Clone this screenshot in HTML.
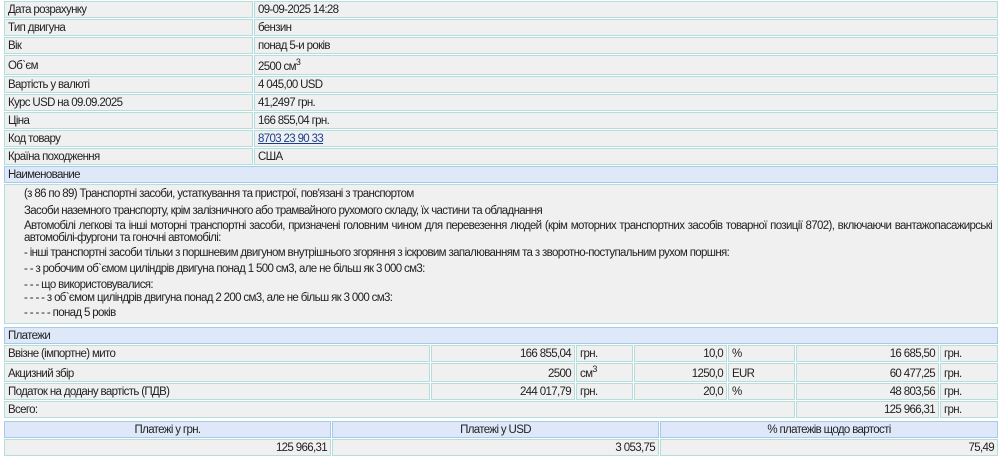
<!DOCTYPE html>
<html><head><meta charset="utf-8"><style>
body{margin:0;width:1000px;height:457px;background:#fff;font-family:"Liberation Sans",Arial,sans-serif;font-size:11.5px;letter-spacing:-0.65px;color:#222;position:relative;overflow:hidden}
.c{position:absolute;box-sizing:border-box;background:#f0f0f0;border:1px solid #b4dede;padding:0 3px;line-height:16px;white-space:nowrap}
.h{background:#dfe8f9;border-color:#a4cce8}
.r{text-align:right}
.m{text-align:center}
sup{font-size:9px;line-height:0}
a{color:#1a3f8f;text-decoration:underline}
.d{position:absolute;left:24px;width:968px;line-height:12px;white-space:nowrap}
.j{text-align:justify;text-align-last:justify;white-space:normal}
</style></head><body>
<div class="c" style="left:4px;top:1px;width:249px;height:17px">Дата розрахунку</div>
<div class="c" style="left:254px;top:1px;width:744px;height:17px">09-09-2025 14:28</div>
<div class="c" style="left:4px;top:19px;width:249px;height:17px">Тип двигуна</div>
<div class="c" style="left:254px;top:19px;width:744px;height:17px">бензин</div>
<div class="c" style="left:4px;top:37px;width:249px;height:17px">Вік</div>
<div class="c" style="left:254px;top:37px;width:744px;height:17px">понад 5-и років</div>
<div class="c" style="left:4px;top:55px;width:249px;height:20px;line-height:20px">Об`єм</div>
<div class="c" style="left:254px;top:55px;width:744px;height:20px;line-height:22px">2500 см<sup>3</sup></div>
<div class="c" style="left:4px;top:76px;width:249px;height:17px">Вартість у валюті</div>
<div class="c" style="left:254px;top:76px;width:744px;height:17px">4 045,00 USD</div>
<div class="c" style="left:4px;top:94px;width:249px;height:17px">Курс USD на 09.09.2025</div>
<div class="c" style="left:254px;top:94px;width:744px;height:17px">41,2497 грн.</div>
<div class="c" style="left:4px;top:112px;width:249px;height:17px">Ціна</div>
<div class="c" style="left:254px;top:112px;width:744px;height:17px">166 855,04 грн.</div>
<div class="c" style="left:4px;top:130px;width:249px;height:17px">Код товару</div>
<div class="c" style="left:254px;top:130px;width:744px;height:17px"><a>8703 23 90 33</a></div>
<div class="c" style="left:4px;top:148px;width:249px;height:17px">Країна походження</div>
<div class="c" style="left:254px;top:148px;width:744px;height:17px">США</div>
<div class="c h" style="left:4px;top:166px;width:994px;height:17px">Наименование</div>
<div class="c" style="left:4px;top:184px;width:994px;height:140px"></div>
<div class="d" style="top:188px">(з 86 по 89) Транспортні засоби, устаткування та пристрої, пов'язані з транспортом</div>
<div class="d" style="top:205px">Засоби наземного транспорту, крім залізничного або трамвайного рухомого складу, їх частини та обладнання</div>
<div class="d j" style="top:220px">Автомобілі легкові та інші моторні транспортні засоби, призначені головним чином для перевезення людей (крім моторних транспортних засобів товарної позиції 8702), включаючи вантажопасажирські</div>
<div class="d" style="top:232px">автомобілі-фургони та гоночні автомобілі:</div>
<div class="d" style="top:247px">- інші транспортні засоби тільки з поршневим двигуном внутрішнього згоряння з іскровим запалюванням та з зворотно-поступальним рухом поршня:</div>
<div class="d" style="top:263px">- - з робочим об`ємом циліндрів двигуна понад 1 500 см3, але не більш як 3 000 см3:</div>
<div class="d" style="top:279px">- - - що використовувалися:</div>
<div class="d" style="top:292px">- - - - з об`ємом циліндрів двигуна понад 2 200 см3, але не більш як 3 000 см3:</div>
<div class="d" style="top:307px">- - - - - понад 5 років</div>
<div class="c h" style="left:4px;top:327px;width:994px;height:17px">Платежи</div>

<div class="c" style="left:4px;top:345px;width:426px;height:17px">Ввізне (імпортне) мито</div>
<div class="c r" style="left:431px;top:345px;width:144px;height:17px">166 855,04</div>
<div class="c" style="left:576px;top:345px;width:57px;height:17px">грн.</div>
<div class="c r" style="left:634px;top:345px;width:93px;height:17px">10,0</div>
<div class="c" style="left:728px;top:345px;width:67px;height:17px">%</div>
<div class="c r" style="left:796px;top:345px;width:143px;height:17px">16 685,50</div>
<div class="c" style="left:940px;top:345px;width:58px;height:17px">грн.</div>

<div class="c" style="left:4px;top:363px;width:426px;height:19px;line-height:20px">Акцизний збір</div>
<div class="c r" style="left:431px;top:363px;width:144px;height:19px;line-height:20px">2500</div>
<div class="c" style="left:576px;top:363px;width:57px;height:19px;line-height:20px">см<sup>3</sup></div>
<div class="c r" style="left:634px;top:363px;width:93px;height:19px;line-height:20px">1250,0</div>
<div class="c" style="left:728px;top:363px;width:67px;height:19px;line-height:20px">EUR</div>
<div class="c r" style="left:796px;top:363px;width:143px;height:19px;line-height:20px">60 477,25</div>
<div class="c" style="left:940px;top:363px;width:58px;height:19px;line-height:20px">грн.</div>

<div class="c" style="left:4px;top:383px;width:426px;height:17px">Податок на додану вартість (ПДВ)</div>
<div class="c r" style="left:431px;top:383px;width:144px;height:17px">244 017,79</div>
<div class="c" style="left:576px;top:383px;width:57px;height:17px">грн.</div>
<div class="c r" style="left:634px;top:383px;width:93px;height:17px">20,0</div>
<div class="c" style="left:728px;top:383px;width:67px;height:17px">%</div>
<div class="c r" style="left:796px;top:383px;width:143px;height:17px">48 803,56</div>
<div class="c" style="left:940px;top:383px;width:58px;height:17px">грн.</div>

<div class="c" style="left:4px;top:401px;width:791px;height:17px">Всего:</div>
<div class="c r" style="left:796px;top:401px;width:143px;height:17px">125 966,31</div>
<div class="c" style="left:940px;top:401px;width:58px;height:17px">грн.</div>

<div class="c h m" style="left:4px;top:421px;width:327px;height:17px">Платежі у грн.</div>
<div class="c h m" style="left:332px;top:421px;width:327px;height:17px">Платежі у USD</div>
<div class="c h m" style="left:660px;top:421px;width:338px;height:17px">% платежів щодо вартості</div>
<div class="c r" style="left:4px;top:439px;width:327px;height:17px">125 966,31</div>
<div class="c r" style="left:332px;top:439px;width:327px;height:17px">3 053,75</div>
<div class="c r" style="left:660px;top:439px;width:338px;height:17px">75,49</div>
</body></html>
